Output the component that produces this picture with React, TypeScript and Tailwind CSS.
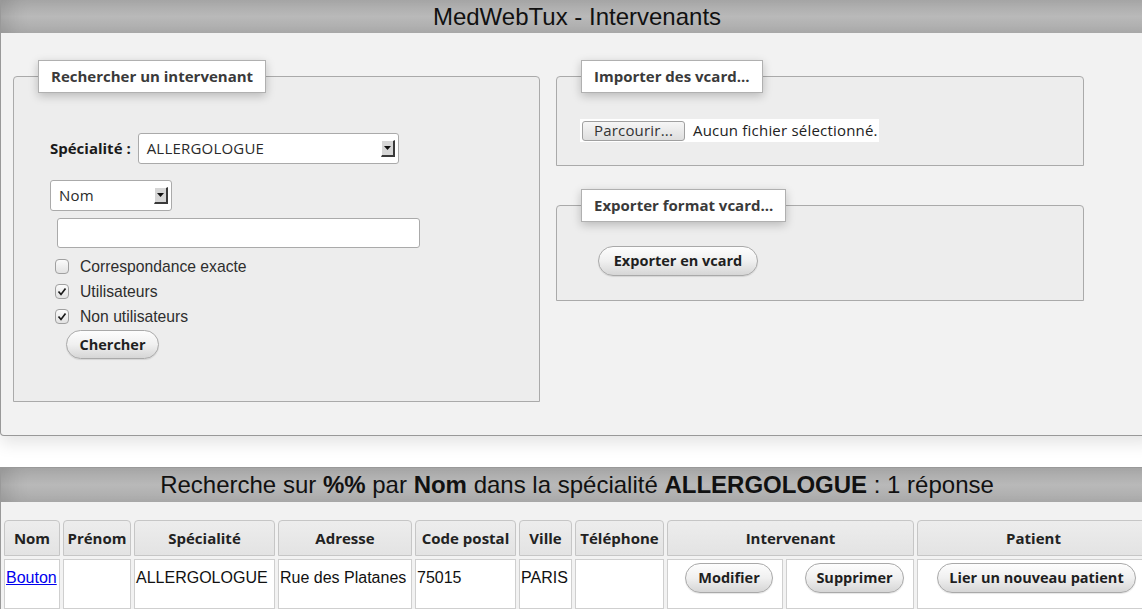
import React from "react";

const UI = "font-['Open_Sans','Noto_Sans',sans-serif]";
const LIB = "font-['Liberation_Sans',Arial,sans-serif]";

function Arrow() {
  return (
    <span className="flex h-[17px] w-[14px] items-center justify-center border-t border-l border-r-2 border-b-2 border-t-white border-l-white border-r-[#3a3a3a] border-b-[#3a3a3a] bg-[#d6d6d6]">
      <svg width="7" height="4" viewBox="0 0 7 4">
        <path d="M0 0h7L3.5 4z" fill="#111" />
      </svg>
    </span>
  );
}

function FakeSelect({ w, text }: { w: string; text: string }) {
  return (
    <div
      className={`flex h-[31px] items-center justify-between rounded-[3px] border border-[#aaaaaa] bg-white pl-[8px] pr-[3px] ${w}`}
    >
      <span className={`${UI} text-[15px] tracking-[0.2px] text-[#2a2a2a]`}>{text}</span>
      <Arrow />
    </div>
  );
}

function Check({ checked }: { checked: boolean }) {
  return (
    <span className="flex h-[15px] w-[14px] items-center justify-center rounded-[4px] border border-[#a0a0a0] bg-gradient-to-b from-[#fbfbfb] to-[#e2e2e2]">
      {checked && (
        <svg width="10" height="9" viewBox="0 0 10 9">
          <path d="M1.5 4.5l2.5 3 4.5-6" fill="none" stroke="#1a1a1a" strokeWidth="1.7" />
        </svg>
      )}
    </span>
  );
}

function PillButton({ children, cls }: { children: React.ReactNode; cls: string }) {
  return (
    <button
      className={`${UI} rounded-full border border-[#a9a9a9] bg-gradient-to-b from-[#fdfdfd] via-[#f0f0f0] to-[#d6d6d6] text-[14.5px] font-bold text-[#1f1f1f] shadow-[0_1px_1px_rgba(0,0,0,0.1)] ${cls}`}
    >
      {children}
    </button>
  );
}

function Legend({ children }: { children: React.ReactNode }) {
  return (
    <legend
      className={`${UI} ml-[24px] h-[33px] border border-[#b0b0b0] bg-white px-[12px] text-[15px] font-bold leading-[31px] text-[#3a3a3a] shadow-[0_3px_9px_rgba(0,0,0,0.22)]`}
    >
      {children}
    </legend>
  );
}

const TH =
  `${UI} h-[36px] rounded-t-[4px] border border-[#c6c6c6] bg-gradient-to-b from-[#ededed] to-[#e3e3e3] text-center align-middle text-[15px] font-bold text-[#222]`;
const TD = `${LIB} h-[50px] border border-[#cfcfcf] bg-white px-[1px] pb-[12px] text-left align-middle text-[16px] text-[#111]`;

export default function App() {
  return (
    <div className="h-[609px] w-[1142px] overflow-hidden bg-white">
      <div className="w-[1154px]">
        {/* Top panel */}
        <div className="rounded-b-[4px] border border-t-0 border-[#999] bg-[#f2f2f2] shadow-[0_8px_16px_rgba(0,0,0,0.10)]">
          <div
            className={`${LIB} flex h-[33px] items-center justify-center bg-gradient-to-b from-[#a7a7a7] via-[#b9b9b9] to-[#aaaaaa] text-[24px] leading-none text-[#111] shadow-[inset_20px_0_20px_-12px_rgba(0,0,0,0.12)]`}
          >
            MedWebTux - Intervenants
          </div>
          <div className="flex gap-[16px] pl-[12px] pt-[27px] pb-[33px]">
            {/* Left fieldset */}
            <fieldset className="h-[342px] w-[527px] rounded-t-[4px] border border-[#aaaaaa] bg-[#ededed]">
              <Legend>Rechercher un intervenant</Legend>
              <div className="pl-[36px]">
                <div className="mt-[40px] flex items-center">
                  <span className={`${UI} mr-[7px] text-[15px] font-bold text-[#1a1a1a]`}>Spécialité :</span>
                  <FakeSelect w="w-[261px]" text="ALLERGOLOGUE" />
                </div>
                <div className="mt-[16px]">
                  <FakeSelect w="w-[122px]" text="Nom" />
                </div>
                <div className="mt-[7px] ml-[7px] h-[30px] w-[363px] rounded-[3px] border border-[#aaaaaa] bg-white" />
                <div className="mt-[6px] ml-[5px] flex flex-col">
                  {[
                    ["Correspondance exacte", false],
                    ["Utilisateurs", true],
                    ["Non utilisateurs", true],
                  ].map(([label, c]) => (
                    <div key={label as string} className="flex h-[25px] items-center">
                      <Check checked={c as boolean} />
                      <span className={`${LIB} ml-[11px] text-[15.7px] text-[#2e2e2e]`}>{label as string}</span>
                    </div>
                  ))}
                </div>
                <PillButton cls="ml-[16px] mt-[1px] h-[29px] w-[93px]">Chercher</PillButton>
              </div>
            </fieldset>

            {/* Right column */}
            <div className="flex flex-col gap-[23px]">
              <fieldset className="h-[106px] w-[528px] rounded-t-[4px] border border-[#aaaaaa] bg-[#ededed]">
                <Legend>Importer des vcard...</Legend>
                <div className="pl-[23px]">
                  <div className="mt-[26px] inline-flex h-[23px] items-center bg-white pr-[1px]">
                    <button
                      className={`${UI} ml-[2px] h-[20px] w-[103px] rounded-[3px] border border-[#a0a0a0] bg-gradient-to-b from-[#f6f6f6] to-[#dedede] text-[15px] leading-none tracking-[0.2px] text-[#333]`}
                    >
                      Parcourir...
                    </button>
                    <span className={`${UI} ml-[8px] text-[15px] tracking-[0.2px] text-[#222]`}>Aucun fichier sélectionné.</span>
                  </div>
                </div>
              </fieldset>
              <fieldset className="h-[112px] w-[528px] rounded-t-[4px] border border-[#aaaaaa] bg-[#ededed]">
                <Legend>Exporter format vcard...</Legend>
                <div className="pl-[41px]">
                  <PillButton cls="mt-[24px] h-[30px] w-[160px]">Exporter en vcard</PillButton>
                </div>
              </fieldset>
            </div>
          </div>
        </div>

        {/* Results panel */}
        <div className="mt-[31px] border border-b-0 border-[#999] bg-[#f2f2f2]">
          <div
            className={`${LIB} flex h-[34px] items-center justify-center bg-gradient-to-b from-[#a7a7a7] via-[#b9b9b9] to-[#aaaaaa] text-[24px] leading-none text-[#111] shadow-[inset_20px_0_20px_-12px_rgba(0,0,0,0.12)]`}
          >
            <span>
              Recherche sur <b>%%</b> par <b>Nom</b> dans la spécialité <b>ALLERGOLOGUE</b> : 1 réponse
            </span>
          </div>
          <div className="pt-[15px]">
            <table className="w-[1152px] table-fixed border-separate border-spacing-[3px]">
              <colgroup>
                <col className="w-[56px]" />
                <col className="w-[68px]" />
                <col className="w-[141px]" />
                <col className="w-[134px]" />
                <col className="w-[101px]" />
                <col className="w-[53px]" />
                <col className="w-[89px]" />
                <col className="w-[116px]" />
                <col className="w-[128px]" />
                <col />
              </colgroup>
              <thead>
                <tr>
                  <th className={TH}>Nom</th>
                  <th className={TH}>Prénom</th>
                  <th className={TH}>Spécialité</th>
                  <th className={TH}>Adresse</th>
                  <th className={TH}>Code postal</th>
                  <th className={TH}>Ville</th>
                  <th className={TH}>Téléphone</th>
                  <th className={TH} colSpan={2}>
                    Intervenant
                  </th>
                  <th className={TH}>Patient</th>
                </tr>
              </thead>
              <tbody>
                <tr>
                  <td className={TD}>
                    <a href="#" className="text-[#0000ee] underline">
                      Bouton
                    </a>
                  </td>
                  <td className={TD}></td>
                  <td className={TD}>ALLERGOLOGUE</td>
                  <td className={TD}>Rue des Platanes</td>
                  <td className={TD}>75015</td>
                  <td className={TD}>PARIS</td>
                  <td className={TD}></td>
                  <td className={TD}>
                    <div className="flex justify-end pr-[8px]">
                      <PillButton cls="h-[30px] w-[88px]">Modifier</PillButton>
                    </div>
                  </td>
                  <td className={TD}>
                    <div className="flex justify-end pr-[8px]">
                      <PillButton cls="h-[30px] w-[99px]">Supprimer</PillButton>
                    </div>
                  </td>
                  <td className={TD}>
                    <div className="flex pl-[18px]">
                      <PillButton cls="h-[30px] w-[199px]">Lier un nouveau patient</PillButton>
                    </div>
                  </td>
                </tr>
              </tbody>
            </table>
          </div>
        </div>
      </div>
    </div>
  );
}
